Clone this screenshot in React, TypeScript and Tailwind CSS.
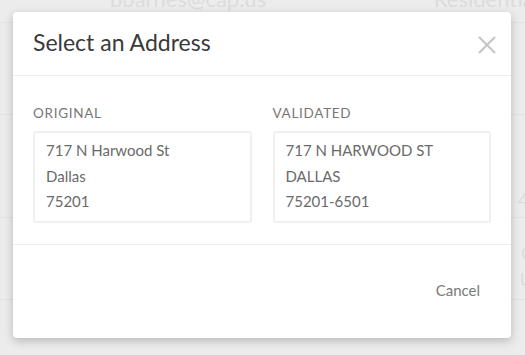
function AddressBox({ label, lines }: { label: string; lines: string[] }) {
  return (
    <div className="flex flex-col">
      <p className="text-[13.5px] tracking-[0.7px] text-[#777] leading-[16px] mb-[10px]">{label}</p>
      <div className="h-[92px] border-2 border-[#f0f0f0] rounded-[3px] px-[11px] pt-[5px]">
        {lines.map((l) => (
          <p key={l} className="text-[15px] leading-[25.5px] text-[#6a6a6a]">{l}</p>
        ))}
      </div>
    </div>
  );
}

export default function App() {
  return (
    <div className="relative w-[525px] h-[355px] overflow-hidden bg-[#ececec] font-['Lato',sans-serif]">
      {/* faded page behind the overlay */}
      <div className="flex flex-col text-[#dcdcdc]">
        <div className="flex h-[23px] border-b border-[#e3e3e3]">
          <span className="ml-[110px] text-[22px] leading-[22px] -mt-[12px]">bbarnes@cap.us</span>
          <span className="ml-auto -mr-[14px] text-[22px] leading-[22px] -mt-[12px]">Residential</span>
        </div>
        <div className="h-[92px] border-b border-[#e3e3e3]" />
        <div className="h-[103px] border-b border-[#e3e3e3] flex justify-end items-end pb-[8px]">
          <span className="text-[20px] leading-[20px] -mr-[4px]">4</span>
        </div>
        <div className="h-[82px] border-b border-[#e3e3e3] flex flex-col items-end pt-[26px] gap-[8px]">
          <span className="text-[18px] leading-[18px] -mr-[8px]">C</span>
          <span className="text-[18px] leading-[18px] -mr-[8px]">U</span>
        </div>
      </div>

      {/* modal */}
      <div className="absolute left-[13px] top-[12px] w-[498px] h-[326px] bg-white rounded-[4px] shadow-[0_3px_10px_rgba(0,0,0,0.22)] flex flex-col">
        <div className="h-[64px] flex items-center justify-between pl-[20px] pr-[15px] border-b border-[#eeeeee]">
          <h2 className="text-[23px] text-[#3a3a3a] -mt-[2px]">Select an Address</h2>
          <svg width="18" height="18" viewBox="0 0 18 18" className="mt-[2px]">
            <path d="M1 1 L17 17 M17 1 L1 17" stroke="#c4c4c4" strokeWidth="2" fill="none" />
          </svg>
        </div>
        <div className="h-[169px] border-b border-[#eeeeee] px-[20px] pt-[29px] grid grid-cols-2 gap-[21px]">
          <AddressBox label="ORIGINAL" lines={["717 N Harwood St", "Dallas", "75201"]} />
          <AddressBox label="VALIDATED" lines={["717 N HARWOOD ST", "DALLAS", "75201-6501"]} />
        </div>
        <div className="flex-1 flex justify-end items-center pr-[29px]">
          <button className="text-[15px] text-[#7a7a7a] px-[2px] -mt-[3px]">Cancel</button>
        </div>
      </div>
    </div>
  );
}
